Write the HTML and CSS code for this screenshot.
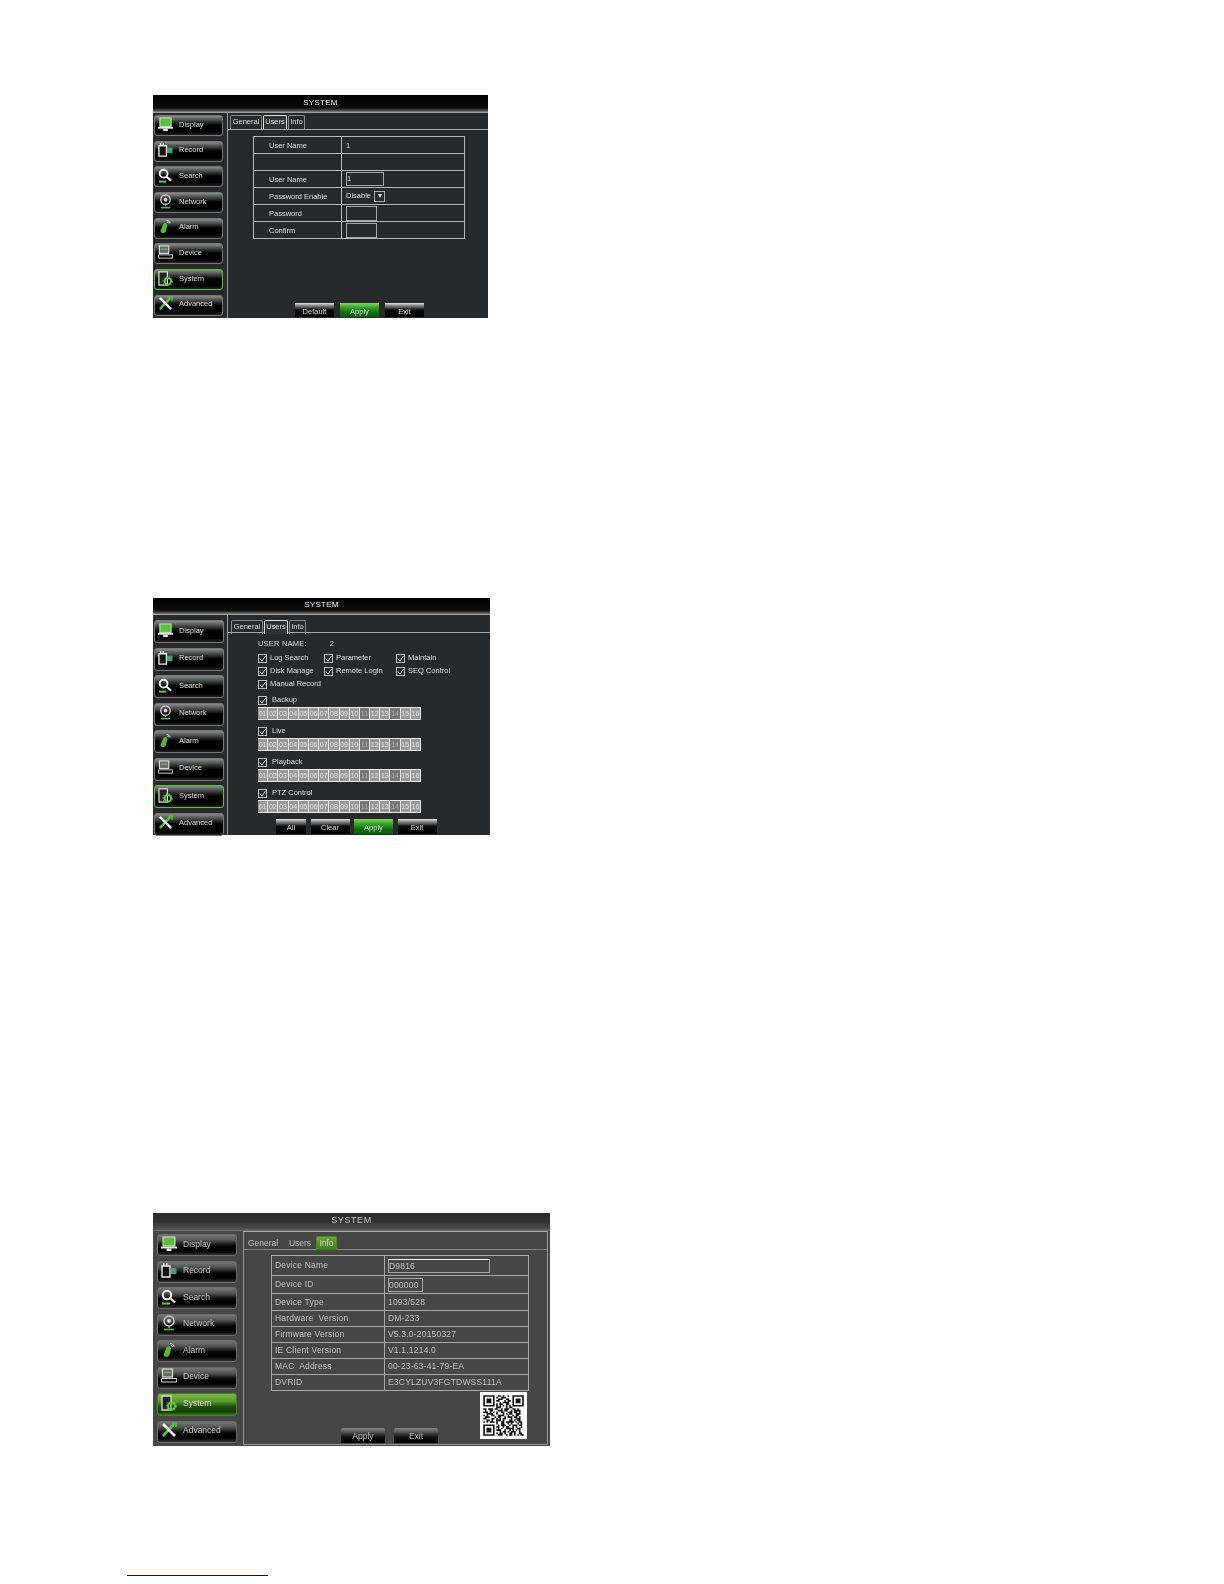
FILE: index.html
```html
<!DOCTYPE html>
<html lang="en">
<head>
    <meta charset="UTF-8">
    <meta name="viewport" content="width=device-width, initial-scale=1.0">
    <title>System Settings</title>
    <link rel="stylesheet" href="styles.css">
</head>
<body>
    <svg class="icon-defs" width="0" height="0">
        <symbol id="i-display" viewBox="0 0 16 16">
            <rect x="2" y="1" width="12" height="9" fill="#58c23c" stroke="#d8e8d0" stroke-width="1"/>
            <rect x="0" y="10.5" width="16" height="2" fill="#e8e8e8"/>
            <rect x="5.5" y="12.5" width="5" height="2.5" fill="#e8e8e8"/>
        </symbol>
        <symbol id="i-record" viewBox="0 0 16 16">
            <path d="M1 4h8v11H1z" fill="#111" stroke="#eee" stroke-width="1.4"/>
            <path d="M2 1h1.5v3H2zM5 1h1.5v3H5z" fill="#eee"/>
            <rect x="9.5" y="6" width="6" height="6" fill="#4d9a7a"/>
        </symbol>
        <symbol id="i-search" viewBox="0 0 16 16">
            <circle cx="6" cy="6" r="4.2" fill="none" stroke="#f0f0f0" stroke-width="2"/>
            <path d="M9 9l5 4.5" stroke="#f0f0f0" stroke-width="2.2"/>
            <path d="M1 14.5h8" stroke="#59c63c" stroke-width="2.2"/>
        </symbol>
        <symbol id="i-network" viewBox="0 0 16 16">
            <circle cx="8" cy="6" r="5" fill="none" stroke="#c4c4c4" stroke-width="1.6"/>
            <circle cx="8" cy="6" r="2" fill="#d8d8d8"/>
            <path d="M8 11v2" stroke="#aaa" stroke-width="1.5"/>
            <path d="M3 14.5h10" stroke="#5bb548" stroke-width="1.8"/>
        </symbol>
        <symbol id="i-alarm" viewBox="0 0 16 16">
            <path d="M5 7c0-2 2-3 4-2.5l1 2-1.5 6.500c-1 2-4 2.500-5.500 1-1-1.500 1-4 2-7z" fill="#57b83c"/>
            <path d="M9 1.500c2 0 3.500 1 4 3M10 3.500c.8 0 1.300.4 1.500 1.200" fill="none" stroke="#eee" stroke-width="1"/>
        </symbol>
        <symbol id="i-device" viewBox="0 0 16 16">
            <rect x="1.500" y="1" width="10" height="8" fill="#667" stroke="#ddd" stroke-width="1.200"/>
            <path d="M3 4.500h7" stroke="#58c23c" stroke-width="1.500"/>
            <path d="M.6 10.500h15v3.500H.6z" fill="none" stroke="#ddd" stroke-width="1"/>
        </symbol>
        <symbol id="i-system" viewBox="0 0 16 16">
            <path d="M1 1h9v14H1z" fill="#222" stroke="#ddd" stroke-width="1.300"/>
            <circle cx="10.500" cy="11" r="3.500" fill="none" stroke="#5fcb3d" stroke-width="2"/>
            <circle cx="10.500" cy="11" r="5" fill="none" stroke="#5fcb3d" stroke-width="1" stroke-dasharray="1.500 1.500"/>
        </symbol>
        <symbol id="i-advanced" viewBox="0 0 16 16">
            <path d="M2 14L13 2" stroke="#58c23c" stroke-width="2.600"/>
            <path d="M2 2l12 12" stroke="#f0f0f0" stroke-width="2.600"/>
            <path d="M11 1h4v4" fill="none" stroke="#58c23c" stroke-width="1.500"/>
        </symbol>
        <symbol id="i-check" viewBox="0 0 10 10">
            <rect x=".5" y=".5" width="9" height="9" fill="none" stroke="#ccc"/>
            <path d="M2 5l2.300 3L8.500 2" fill="none" stroke="#eee" stroke-width="1"/>
        </symbol>
    </svg>

    <!-- users list -->
    <section class="dvr dvr-one">
        <h2 class="dvr-title">SYSTEM</h2>
        <div class="dvr-body">
            <nav class="side">
                <a class="side-btn"><svg class="side-icon"><use href="#i-display"/></svg>Display</a>
                <a class="side-btn"><svg class="side-icon"><use href="#i-record"/></svg>Record</a>
                <a class="side-btn"><svg class="side-icon"><use href="#i-search"/></svg>Search</a>
                <a class="side-btn"><svg class="side-icon"><use href="#i-network"/></svg>Network</a>
                <a class="side-btn"><svg class="side-icon"><use href="#i-alarm"/></svg>Alarm</a>
                <a class="side-btn"><svg class="side-icon"><use href="#i-device"/></svg>Device</a>
                <a class="side-btn active"><svg class="side-icon"><use href="#i-system"/></svg>System</a>
                <a class="side-btn"><svg class="side-icon"><use href="#i-advanced"/></svg>Advanced</a>
            </nav>
            <div class="main">
                <div class="tabs">
                    <span class="tab tab-general">General</span>
                    <span class="tab tab-users selected">Users</span>
                    <span class="tab tab-info">Info</span>
                </div>
                <table class="form-table">
                    <tr><td>User Name</td><td>1</td></tr>
                    <tr><td></td><td></td></tr>
                    <tr><td>User Name</td><td><span class="field field-name">1</span></td></tr>
                    <tr><td>Password Enable</td><td>Disable <span class="arrow-box">&#9662;</span></td></tr>
                    <tr><td>Password</td><td><span class="field field-pass"></span></td></tr>
                    <tr><td>Confirm</td><td><span class="field field-pass"></span></td></tr>
                </table>
                <div class="actions">
                    <span class="action">Default</span>
                    <span class="action green">Apply</span>
                    <span class="action">Exit</span>
                </div>
            </div>
        </div>
    </section>

    <!-- user rights -->
    <section class="dvr dvr-two">
        <h2 class="dvr-title">SYSTEM</h2>
        <div class="dvr-body">
            <nav class="side">
                <a class="side-btn"><svg class="side-icon"><use href="#i-display"/></svg>Display</a>
                <a class="side-btn"><svg class="side-icon"><use href="#i-record"/></svg>Record</a>
                <a class="side-btn"><svg class="side-icon"><use href="#i-search"/></svg>Search</a>
                <a class="side-btn"><svg class="side-icon"><use href="#i-network"/></svg>Network</a>
                <a class="side-btn"><svg class="side-icon"><use href="#i-alarm"/></svg>Alarm</a>
                <a class="side-btn"><svg class="side-icon"><use href="#i-device"/></svg>Device</a>
                <a class="side-btn active"><svg class="side-icon"><use href="#i-system"/></svg>System</a>
                <a class="side-btn"><svg class="side-icon"><use href="#i-advanced"/></svg>Advanced</a>
            </nav>
            <div class="main">
                <div class="tabs">
                    <span class="tab tab-general">General</span>
                    <span class="tab tab-users selected">Users</span>
                    <span class="tab tab-info">Info</span>
                </div>
                <div class="rights">
                    <div class="user-line"><span>USER NAME:</span><span>2</span></div>
                    <div class="check-grid">
                        <label class="check"><svg class="check-box"><use href="#i-check"/></svg>Log Search</label>
                        <label class="check"><svg class="check-box"><use href="#i-check"/></svg>Parameter</label>
                        <label class="check"><svg class="check-box"><use href="#i-check"/></svg>Maintain</label>
                        <label class="check"><svg class="check-box"><use href="#i-check"/></svg>Disk Manage</label>
                        <label class="check"><svg class="check-box"><use href="#i-check"/></svg>Remote Login</label>
                        <label class="check"><svg class="check-box"><use href="#i-check"/></svg>SEQ Control</label>
                        <label class="check"><svg class="check-box"><use href="#i-check"/></svg>Manual Record</label>
                    </div>
                    <label class="check channel-head"><svg class="check-box"><use href="#i-check"/></svg>Backup</label>
                    <div class="channels"><span>01</span><span>02</span><span>03</span><span>04</span><span>05</span><span>06</span><span>07</span><span>08</span><span>09</span><span>10</span><span class="dim">11</span><span>12</span><span>13</span><span class="dim">14</span><span>15</span><span>16</span></div>
                    <label class="check channel-head"><svg class="check-box"><use href="#i-check"/></svg>Live</label>
                    <div class="channels"><span>01</span><span>02</span><span>03</span><span>04</span><span>05</span><span>06</span><span>07</span><span>08</span><span>09</span><span>10</span><span class="dim">11</span><span>12</span><span>13</span><span class="dim">14</span><span>15</span><span>16</span></div>
                    <label class="check channel-head"><svg class="check-box"><use href="#i-check"/></svg>Playback</label>
                    <div class="channels"><span>01</span><span>02</span><span>03</span><span>04</span><span>05</span><span>06</span><span>07</span><span>08</span><span>09</span><span>10</span><span class="dim">11</span><span>12</span><span>13</span><span class="dim">14</span><span>15</span><span>16</span></div>
                    <label class="check channel-head"><svg class="check-box"><use href="#i-check"/></svg>PTZ Control</label>
                    <div class="channels"><span>01</span><span>02</span><span>03</span><span>04</span><span>05</span><span>06</span><span>07</span><span>08</span><span>09</span><span>10</span><span class="dim">11</span><span>12</span><span>13</span><span class="dim">14</span><span>15</span><span>16</span></div>
                </div>
                <div class="actions">
                    <span class="action action-all">All</span>
                    <span class="action">Clear</span>
                    <span class="action green">Apply</span>
                    <span class="action">Exit</span>
                </div>
            </div>
        </div>
    </section>

    <!-- device info -->
    <section class="dvr dvr-three">
        <h2 class="dvr-title">SYSTEM</h2>
        <div class="dvr-body">
            <nav class="side">
                <a class="side-btn"><svg class="side-icon"><use href="#i-display"/></svg>Display</a>
                <a class="side-btn"><svg class="side-icon"><use href="#i-record"/></svg>Record</a>
                <a class="side-btn"><svg class="side-icon"><use href="#i-search"/></svg>Search</a>
                <a class="side-btn"><svg class="side-icon"><use href="#i-network"/></svg>Network</a>
                <a class="side-btn"><svg class="side-icon"><use href="#i-alarm"/></svg>Alarm</a>
                <a class="side-btn"><svg class="side-icon"><use href="#i-device"/></svg>Device</a>
                <a class="side-btn active"><svg class="side-icon"><use href="#i-system"/></svg>System</a>
                <a class="side-btn"><svg class="side-icon"><use href="#i-advanced"/></svg>Advanced</a>
            </nav>
            <div class="main">
                <div class="tabs">
                    <span class="tab tab-general">General</span>
                    <span class="tab tab-users">Users</span>
                    <span class="tab tab-info selected">Info</span>
                </div>
                <table class="form-table">
                    <tr><td>Device Name</td><td><span class="field field-device">D9816</span></td></tr>
                    <tr><td>Device ID</td><td><span class="field field-id">000000</span></td></tr>
                    <tr><td>Device Type</td><td>1093/528</td></tr>
                    <tr><td>Hardware&nbsp; Version</td><td>DM-233</td></tr>
                    <tr><td>Firmware Version</td><td>V5.3.0-20150327</td></tr>
                    <tr><td>IE Client Version</td><td>V1.1.1214.0</td></tr>
                    <tr><td>MAC&nbsp; Address</td><td>00-23-63-41-79-EA</td></tr>
                    <tr><td>DVRID</td><td>E3CYLZUV3FGTDWSS111A</td></tr>
                </table>
                <div class="actions">
                    <span class="action">Apply</span>
                    <span class="action">Exit</span>
                    <svg class="qr" viewBox="-2 -2 29 29">
                        <path fill="none" stroke="#111" stroke-width="1" d="M0 .5h7m2 0h2m1 0h1m2 0h1m2 0h7M0 1.500h1m5 0h1m1 0h1m2 0h3m4 0h1m5 0h1M0 2.500h1m1 0h3m1 0h1m2 0h3m2 0h2m2 0h1m1 0h3m1 0h1M0 3.500h1m1 0h3m1 0h1m1 0h2m3 0h1m1 0h2m1 0h1m1 0h3m1 0h1M0 4.500h1m1 0h3m1 0h1m3 0h1m1 0h4m2 0h1m1 0h3m1 0h1M0 5.500h1m5 0h1m1 0h1m1 0h2m2 0h2m2 0h1m5 0h1M0 6.500h7m1 0h1m1 0h1m1 0h1m1 0h1m1 0h1m1 0h7M8 7.500h3m3 0h1m1 0h2M0 8.500h2m1 0h3m1 0h2m2 0h1m1 0h3m2 0h2m1 0h1M1 9.500h1m2 0h2m3 0h3m1 0h2m2 0h1m1 0h4M0 10.500h3m1 0h1m1 0h1m1 0h1m2 0h2m2 0h3m1 0h2m1 0h1M2 11.500h4m2 0h1m3 0h1m1 0h1m1 0h2m2 0h3M0 12.500h1m1 0h1m2 0h2m2 0h4m2 0h1m2 0h1m1 0h2M1 13.500h3m3 0h1m1 0h2m2 0h1m1 0h3m1 0h2m1 0h1M0 14.500h2m3 0h2m1 0h1m1 0h1m1 0h2m3 0h1m2 0h3M2 15.500h2m1 0h1m2 0h3m1 0h1m3 0h2m1 0h1m1 0h2M0 16.500h1m1 0h1m1 0h3m1 0h1m2 0h2m1 0h5m1 0h1m1 0h2M8 17.500h1m2 0h2m2 0h1m1 0h1m3 0h1m1 0h1M0 18.500h7m2 0h1m1 0h3m2 0h1m1 0h3m1 0h2M0 19.500h1m5 0h1m1 0h2m2 0h1m1 0h2m2 0h1m1 0h1m2 0h1M0 20.500h1m1 0h3m1 0h1m2 0h1m1 0h1m2 0h5m2 0h2M0 21.500h1m1 0h3m1 0h1m1 0h3m2 0h1m2 0h1m1 0h1m1 0h1m1 0h1M0 22.500h1m1 0h3m1 0h1m3 0h1m1 0h2m1 0h1m1 0h3m2 0h1M0 23.500h1m5 0h1m1 0h1m1 0h2m1 0h1m2 0h2m1 0h1m2 0h2M0 24.500h7m2 0h3m2 0h1m1 0h2m1 0h1m1 0h1m1 0h2"/>
                    </svg>
                </div>
            </div>
        </div>
    </section>

    <div class="footnote-rule"></div>
</body>
</html>
```

FILE: styles.css
```css
body {
    margin: 0;
    height: 1584px;
    background-color: #fff;
    font-family: "Liberation Sans", Arial, sans-serif;
    overflow: hidden;
}
.icon-defs { position: absolute; }

/* one photographed screen */
.dvr {
    display: flex;
    flex-direction: column;
    margin-left: 153px;
    background-color: #27292b;
    color: #ddd;
    font-size: 7.5px;
    filter: blur(0.35px);
}
.dvr-one { width: 335px; height: 223px; margin-top: 95px; }
.dvr-two { width: 337px; height: 237px; margin-top: 280px; }
.dvr-three {
    width: 397px;
    height: 233px;
    margin-top: 378px;
    background-color: #464646;
    color: #c4c4c4;
    font-size: 8.5px;
    filter: blur(0.25px);
}
.dvr-title {
    height: 18px;
    margin: 0;
    box-sizing: border-box;
    padding-top: 3px;
    background: linear-gradient(#000 0, #0c0c0c 72%, #555 88%, #b5b5b5 100%);
    text-align: center;
    font-size: 8px;
    font-weight: normal;
    line-height: 9px;
    letter-spacing: 0.3px;
    color: #eee;
}
.dvr-two .dvr-title { height: 17px; padding-top: 2px; }
.dvr-three .dvr-title {
    height: 18px;
    background: linear-gradient(#2b2b2b 0, #333 50%, #4e4e4e 90%, #777 100%);
    font-size: 9px;
    letter-spacing: 0.6px;
    color: #c8c8c8;
}
.dvr-body { flex: 1; display: flex; min-height: 0; }

/* left menu */
.side {
    width: 74px;
    box-sizing: border-box;
    padding: 2px 0 0 1px;
    display: flex;
    flex-direction: column;
    gap: 4.700px;
}
.dvr-two .side { padding-top: 5px; gap: 4.500px; }
.dvr-three .side { width: 90px; padding: 3px 0 0 4px; gap: 4.500px; }
.side-btn {
    display: flex;
    align-items: center;
    gap: 6px;
    width: 69px;
    height: 21px;
    flex: none;
    box-sizing: border-box;
    padding: 0 0 3px 3px;
    border: 1px solid #777;
    border-radius: 3px;
    background: linear-gradient(#8a8c8c 0, #4a4b4b 22%, #000 48%, #000 82%, #222 100%);
    color: #ddd;
}
.dvr-two .side-btn { width: 70px; height: 23px; }
.dvr-three .side-btn {
    width: 80px;
    height: 22px;
    border-color: #6c6c6c;
    background: linear-gradient(#777 0, #555 25%, #050505 55%, #000 80%, #333 100%);
    color: #c4c4c4;
}
.side-btn.active { border-color: #58c23c; }
.dvr-three .side-btn.active {
    height: 23px;
    border-color: #3e8a22;
    background: linear-gradient(#7fb545 0, #5c9a2c 35%, #1e4f0c 60%, #163c09 85%, #3d7a1c 100%);
    color: #ddd;
}
.side-icon { width: 15px; height: 15px; flex: none; }
.dvr-three .side-icon { width: 16px; height: 16px; }

/* right panel */
.main {
    flex: 1;
    display: flex;
    flex-direction: column;
    min-width: 0;
    border-left: 1px solid #9a9a9a;
}
.dvr-three .main {
    margin: 0 2px 1px 0;
    border: 1px solid #999;
    border-top-color: #aaa;
}
.tabs {
    display: flex;
    height: 17px;
    flex: none;
    box-sizing: border-box;
    padding: 2px 0 0 2px;
    border-bottom: 1px solid #a8a8a8;
}
.dvr-two .tabs { height: 18px; padding: 5px 0 0 3px; }
.dvr-three .tabs { height: 18px; padding: 4px 0 0 3px; border-bottom-color: #888; }
.tab {
    height: 14px;
    box-sizing: border-box;
    border: 1px solid #8a8a8a;
    border-bottom: none;
    text-align: center;
    line-height: 12px;
    border-radius: 2px 2px 0 0;
}
.tab-general { width: 32px; }
.tab-users { width: 24px; margin-left: 1px; }
.tab-info { width: 17px; margin-left: 1px; }
.tab.selected { border-color: #ddd; background-color: #2f3234; }
.dvr-three .tab { border-color: transparent; height: 14px; }
.dvr-three .tab-users { width: 28px; margin-left: 7px; }
.dvr-three .tab-info { width: 21px; margin-left: 2px; }
.dvr-three .tab.selected {
    border-color: #4b8a28;
    background: linear-gradient(#6aa83a, #3f7d1e);
    color: #ccc;
}

/* label / value table */
.form-table {
    width: 212px;
    margin: 6px 0 0 25px;
    border-collapse: collapse;
    table-layout: fixed;
}
.form-table td {
    height: 17px;
    padding: 0 0 0 4px;
    border: 1px solid #b8b8b8;
    box-sizing: border-box;
    line-height: 9px;
    white-space: nowrap;
}
.form-table td:first-child { width: 88px; padding-left: 15px; }
.dvr-three .form-table { width: 258px; margin: 5px 0 0 27px; }
.dvr-three .form-table td { height: 16px; padding-left: 3px; border-color: #a8a8a8; letter-spacing: 0.2px; }
.dvr-three .form-table td:first-child { width: 113px; padding-left: 3px; }
.dvr-three .form-table tr:first-child td { height: 20px; }
.dvr-three .form-table tr:nth-child(2) td { height: 18px; }
.dvr-three .form-table tr:nth-child(3) td { height: 17px; }
.field {
    display: block;
    box-sizing: border-box;
    border: 1px solid #a8a8a8;
    line-height: 12px;
}
.field-name { width: 38px; height: 14px; }
.field-pass { width: 31px; height: 15px; }
.field-device { width: 102px; height: 14px; border-top-color: #eee; }
.field-id { width: 35px; height: 14px; }
.arrow-box {
    display: inline-block;
    width: 9px;
    height: 9px;
    margin-left: 1px;
    border: 1px solid #aaa;
    text-align: center;
    vertical-align: middle;
    line-height: 8px;
    font-size: 8px;
}

/* bottom buttons */
.actions {
    display: flex;
    gap: 6px;
    margin-top: auto;
    padding: 0 0 1px 67px;
    align-items: flex-end;
}
.action {
    width: 39px;
    height: 14px;
    box-sizing: border-box;
    padding-top: 4px;
    background: linear-gradient(#e4e4e4 0, #8b8b8b 18%, #0a0a0a 50%, #000 100%);
    text-align: center;
    line-height: 9px;
    color: #ddd;
}
.action.green { background: linear-gradient(#7fdc62 0, #3aa52a 30%, #0b6a10 70%, #0b5f10 100%); }
.dvr-two .actions { gap: 4.500px; padding-left: 48px; }
.dvr-two .action { height: 15px; }
.dvr-two .action-all { width: 30px; }
.dvr-three .actions { gap: 9px; padding: 0 0 1px 97px; }
.dvr-three .action {
    width: 44px;
    height: 15px;
    border-radius: 2px 2px 0 0;
    background: linear-gradient(#888 0, #5a5a5a 25%, #111 60%, #000 100%);
    color: #bbb;
}
.qr {
    width: 47px;
    height: 47px;
    margin: 0 0 4px 33px;
    background-color: #fff;
}

/* second screen content */
.rights { padding: 6px 0 0 30px; }
.user-line { display: flex; gap: 23px; height: 10px; line-height: 10px; letter-spacing: 0.2px; }
.check {
    display: flex;
    align-items: center;
    gap: 3px;
    height: 13px;
    white-space: nowrap;
}
.check-box { width: 9px; height: 9px; flex: none; margin-top: 2px; }
.check-grid {
    display: grid;
    grid-template-columns: 66px 72px 60px;
    margin-top: 2px;
}
.channel-head { gap: 5px; height: 12px; margin-top: 4px; }
.check-grid + .channel-head { margin-top: 3px; }
.channels {
    display: grid;
    grid-template-columns: repeat(16, 10.200px);
    width: 163px;
    height: 13px;
    margin-top: 2px;
    background-color: #e8e8e8;
    padding: 1px 0;
    box-sizing: border-box;
}
.channels span {
    background-color: #999;
    border-right: 1px solid #e8e8e8;
    text-align: center;
    line-height: 11px;
    font-size: 7px;
    color: #e4e4e4;
}
.channels .dim { background-color: #777; color: #aaa; }

.footnote-rule {
    width: 141px;
    height: 1px;
    margin: 129px 0 0 127px;
    background-color: #0b0b8c;
}
```
